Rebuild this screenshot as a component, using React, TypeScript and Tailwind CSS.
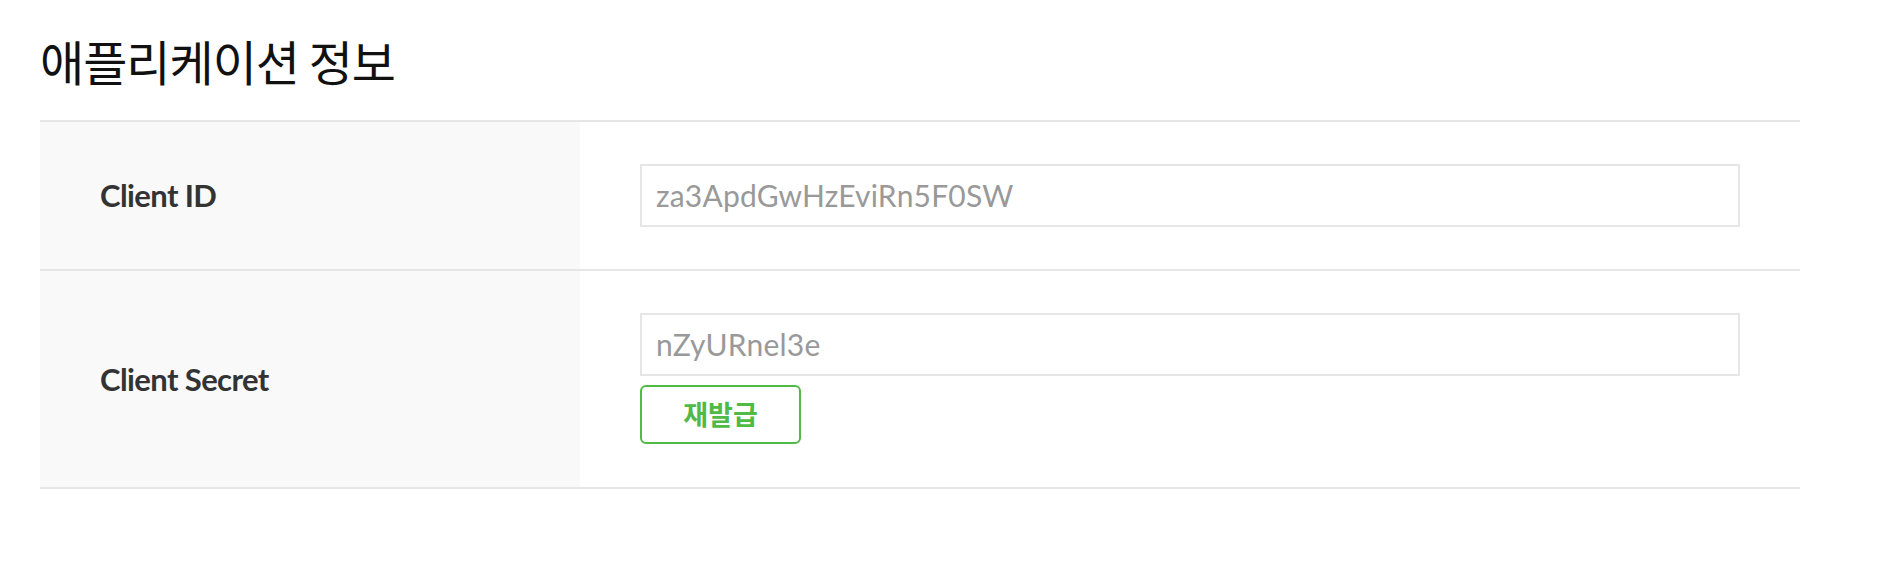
export default function App() {
  const rows = [
    { label: "Client ID", value: "za3ApdGwHzEviRn5F0SW", reissue: false },
    { label: "Client Secret", value: "nZyURnel3e", reissue: true },
  ];

  return (
    <div className="min-h-[584px] w-full bg-white px-10 pt-[36px] font-['Lato','Noto_Sans_CJK_KR',sans-serif]">
      <h2 className="mb-[36px] font-['Noto_Sans_CJK_KR',sans-serif] text-[48px] leading-[48px] font-normal tracking-[-1px] text-[#111]">
        애플리케이션 정보
      </h2>

      <div className="w-[1760px] border-t-2 border-[#e6e6e6]">
        {rows.map((row) => (
          <div key={row.label} className="grid grid-cols-[540px_1fr] border-b-2 border-[#e6e6e6]">
            <div className="flex items-center bg-[#f9f9f9] pl-[60px] text-[31px] font-bold tracking-[-0.6px] text-[#333]">
              {row.label}
            </div>
            <div className={`px-[60px] pt-[42px] ${row.reissue ? "pb-[43px]" : "pb-[42px]"}`}>
              <div className="flex h-[63px] w-[1100px] items-center border-2 border-[#e6e6e6] bg-white px-[14px] text-[30px] tracking-[0.2px] text-[#999]">
                {row.value}
              </div>
              {row.reissue && (
                <button className="mt-[9px] flex h-[59px] w-[161px] items-center justify-center rounded-[6px] border-2 border-[#4fba45] bg-white font-['Noto_Sans_CJK_KR',sans-serif] text-[27px] font-bold text-[#4fba45]">
                  재발급
                </button>
              )}
            </div>
          </div>
        ))}
      </div>
    </div>
  );
}
